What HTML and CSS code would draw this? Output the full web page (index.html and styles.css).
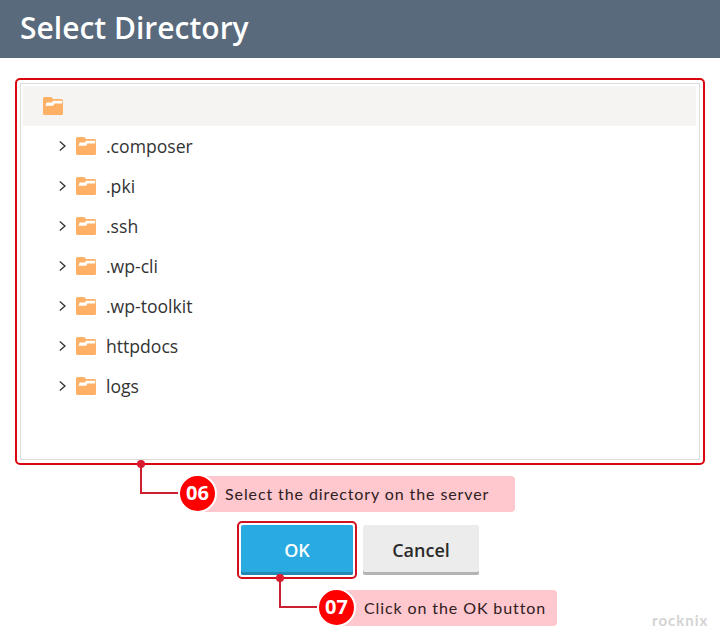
FILE: index.html
```html
<!DOCTYPE html>
<html lang="en">
<head>
<meta charset="utf-8">
<title>Select Directory</title>
<link rel="stylesheet" href="styles.css">
</head>
<body>
<svg class="defs" width="0" height="0" aria-hidden="true">
  <symbol id="folder" viewBox="0 0 20 18">
    <path d="M1.5 0H7.5Q8.5 0 9.2 1L10 2H18.5Q20 2 20 3.5V16.5Q20 18 18.5 18H1.5Q0 18 0 16.5V1.5Q0 0 1.5 0Z" fill="#fdb066"/>
    <path d="M2.5 9L3.6 5.6H9L10 3.8H19.2V6.6H11.4L10.2 8.8H4Z" fill="#fff"/>
  </symbol>
  <symbol id="chev" viewBox="0 0 7 10">
    <path d="M.8 .6L6 5L.8 9.4" fill="none" stroke="#333" stroke-width="1.3"/>
  </symbol>
</svg>
<header class="head"><h1 class="title">Select Directory</h1></header>
<main class="main">
  <div class="frame">
    <div class="panel">
      <div class="root"><svg class="folder"><use href="#folder"/></svg></div>
      <ul class="tree">
        <li class="item"><svg class="chev"><use href="#chev"/></svg><svg class="folder"><use href="#folder"/></svg><span>.composer</span></li>
        <li class="item"><svg class="chev"><use href="#chev"/></svg><svg class="folder"><use href="#folder"/></svg><span>.pki</span></li>
        <li class="item"><svg class="chev"><use href="#chev"/></svg><svg class="folder"><use href="#folder"/></svg><span>.ssh</span></li>
        <li class="item"><svg class="chev"><use href="#chev"/></svg><svg class="folder"><use href="#folder"/></svg><span>.wp-cli</span></li>
        <li class="item"><svg class="chev"><use href="#chev"/></svg><svg class="folder"><use href="#folder"/></svg><span>.wp-toolkit</span></li>
        <li class="item"><svg class="chev"><use href="#chev"/></svg><svg class="folder"><use href="#folder"/></svg><span>httpdocs</span></li>
        <li class="item"><svg class="chev"><use href="#chev"/></svg><svg class="folder"><use href="#folder"/></svg><span>logs</span></li>
      </ul>
    </div>
  </div>
  <div class="actions">
    <div class="ok-ring"><button class="btn btn-ok">OK</button></div>
    <button class="btn btn-cancel">Cancel</button>
  </div>
</main>

<div class="note note-06">
  <span class="dot"></span><span class="elbow"></span>
  <span class="badge">06</span><span class="label">Select the directory on the server</span>
</div>
<div class="note note-07">
  <span class="dot"></span><span class="elbow"></span>
  <span class="badge">07</span><span class="label">Click on the OK button</span>
</div>
<div class="brand">rocknix</div>
</body>
</html>
```
FILE: styles.css
```css
* { box-sizing: border-box; }
html, body { margin: 0; padding: 0; }
body {
  width: 720px;
  height: 634px;
  overflow: hidden;
  position: relative;
  background: #fff;
  font-family: "Open Sans", sans-serif;
  color: #333;
}
.defs { position: absolute; }
.head {
  height: 58px;
  background: #586a7c;
  display: flex;
  align-items: center;
  padding: 0 20px 2px;
}
.title {
  margin: 0;
  font-size: 30px;
  font-weight: 600;
  color: #fff;
  line-height: 1;
}
.main { padding: 20px 15px 0; }
.frame {
  width: 690px;
  height: 387px;
  border: 2px solid #d9060f;
  border-radius: 5px;
  padding: 3px;
}
.panel {
  height: 100%;
  border: 1px solid #dcdcdc;
  padding: 2px 3px 0 2px;
}
.root {
  height: 40px;
  background: #f5f4f3;
  display: flex;
  align-items: center;
  padding-left: 20px;
}
.tree { list-style: none; margin: 0; padding: 0; }
.item {
  height: 40px;
  display: flex;
  align-items: center;
  padding-left: 36px;
  font-size: 17.6px;
  color: #333;
}
.chev { width: 7px; height: 10px; margin-right: 10px; }
.folder { width: 20px; height: 18px; flex: none; display: block; }
.item .folder { margin-right: 10px; }
.actions {
  display: flex;
  gap: 6px;
  margin: 56px 0 0 222px;
  align-items: flex-start;
}
.ok-ring {
  width: 120px;
  height: 58px;
  border: 2px solid #cf1120;
  border-radius: 5px;
  padding: 2px;
}
.btn {
  border: 0;
  border-radius: 2px;
  font-family: "Open Sans", sans-serif;
  font-size: 18px;
  font-weight: 600;
  padding: 0;
}
.btn-ok {
  width: 112px;
  height: 50px;
  background: #29abe2;
  color: #fff;
  box-shadow: inset 0 -3px 0 #2089b5;
}
.btn-cancel {
  width: 116px;
  height: 50px;
  margin-top: 4px;
  background: #ececec;
  color: #2b2b2b;
  box-shadow: inset 0 -3px 0 #b4b4b4;
}
.note { position: absolute; }
.note-06 { left: 137px; top: 460px; width: 378px; height: 52px; }
.note-07 { left: 276px; top: 574px; width: 281px; height: 52px; }
.dot {
  position: absolute;
  left: 0; top: 0;
  width: 8px; height: 8px;
  border-radius: 50%;
  background: #dc1c2e;
}
.elbow {
  position: absolute;
  left: 3px; top: 4px;
  width: 42px; height: 30px;
  border-left: 2px solid #cc2030;
  border-bottom: 2px solid #cc2030;
}
.badge {
  position: absolute;
  left: 41px; top: 14px;
  z-index: 2;
  width: 39px; height: 39px;
  border-radius: 50%;
  background: #f00;
  border: 2px solid #fff;
  color: #fff;
  font: 700 20px/34px "Open Sans", sans-serif;
  text-align: center;
}
.label {
  position: absolute;
  left: 62px; right: 0; top: 16px;
  height: 36px;
  background: #ffc7ce;
  border-radius: 0 4px 4px 0;
  padding-left: 26px;
  font: 400 16px/36px Lato, sans-serif;
  letter-spacing: .9px;
  color: #2e2022;
  white-space: nowrap;
}
.brand {
  position: absolute;
  left: 652px; top: 611px;
  font: 700 15px/18px Lato, sans-serif;
  letter-spacing: 1px;
  color: #d4d4d4;
}
```
